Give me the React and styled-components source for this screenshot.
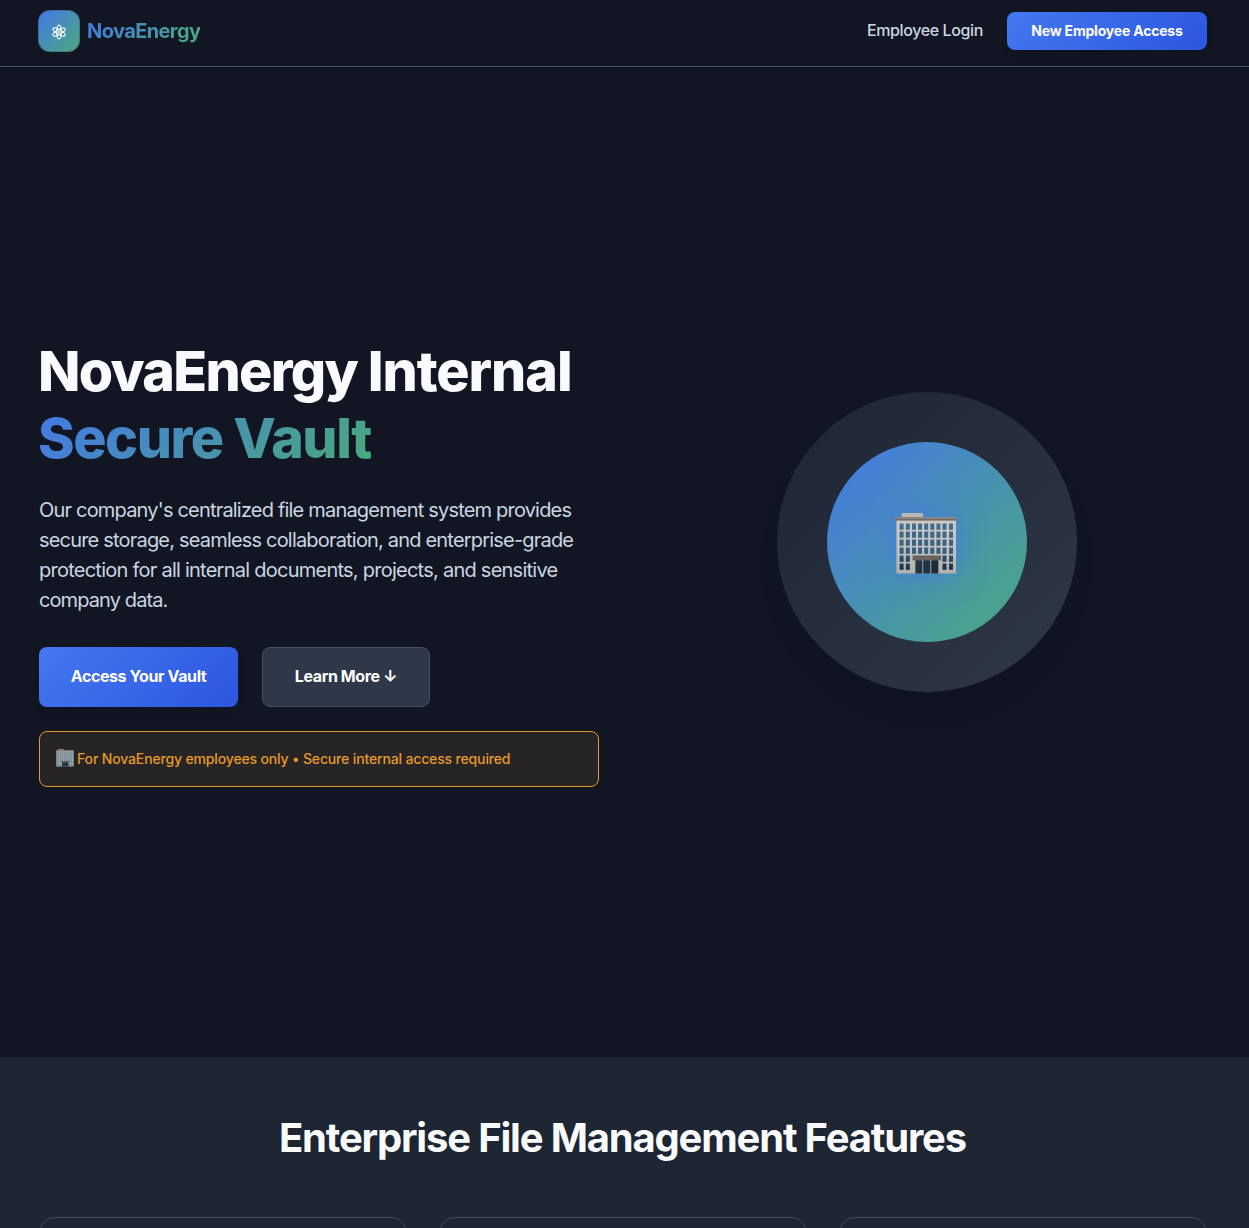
import React from "react";
import styled, { createGlobalStyle } from "styled-components";

const Global = createGlobalStyle`
  *, *::before, *::after { box-sizing: border-box; }
  html { overflow: hidden; height: 100%; }
  body {
    margin: 0;
    height: 100%;
    overflow: hidden;
    background: #121623;
    color: #f8fafc;
    font-family: Inter, "Liberation Sans", sans-serif;
    -webkit-font-smoothing: antialiased;
  }
  h1, h2, p { margin: 0; }
`;

const brandGradient = "linear-gradient(135deg, #4478e8 0%, #4aaa7b 100%)";

const Nav = styled.header`
  height: 67px;
  padding: 0 42px 5px 38px;
  border-bottom: 1px solid #434e61;
  display: flex;
  align-items: center;
  justify-content: space-between;
`;

const Brand = styled.div`
  display: flex;
  align-items: center;
  gap: 7px;
`;

const LogoTile = styled.div`
  width: 42px;
  height: 42px;
  margin-top: 1px;
  border-radius: 12px;
  background: ${brandGradient};
  border: 1px solid rgba(67, 78, 97, 0.45);
  background-origin: border-box;
  display: grid;
  place-items: center;
  padding-top: 2px;
`;

const BrandName = styled.span`
  font-size: 20px;
  line-height: 30px;
  font-weight: 700;
  letter-spacing: -0.6px;
  background: ${brandGradient};
  background-clip: text;
  -webkit-background-clip: text;
  color: transparent;
`;

const NavActions = styled.nav`
  display: flex;
  align-items: center;
  gap: 24px;
`;

const NavLink = styled.a`
  font-size: 16px;
  line-height: 24px;
  font-weight: 520;
  letter-spacing: -0.38px;
  color: #cbd5e1;
  padding-bottom: 2px;
`;

const Button = styled.button`
  font-family: inherit;
  font-weight: 650;
  color: #ffffff;
  border: ${(p) => (p.$muted ? "1px solid #434e61" : "0")};
  border-radius: 8px;
  background: ${(p) => (p.$muted ? "#2f3848" : "linear-gradient(135deg, #4478f0 0%, #2c56e0 100%)")};
  box-shadow: ${(p) => (p.$muted ? "none" : "0 4px 6px -1px rgba(0, 0, 0, 0.15)")};
  width: ${(p) => p.$width}px;
  height: ${(p) => (p.$small ? 38 : 60)}px;
  font-size: ${(p) => (p.$small ? 14 : 16)}px;
  letter-spacing: ${(p) => (p.$small ? "-0.2px" : "-0.4px")};
  padding: ${(p) => (p.$small ? "0" : "0 0 2px")};
  white-space: nowrap;
`;

const Hero = styled.main`
  height: 990px;
  padding: 0 42px 0 39px;
  display: grid;
  grid-template-columns: 560px 560px;
  column-gap: 48px;
  align-items: center;
`;

const Title = styled.h1`
  font-size: 55.5px;
  line-height: 67.2px;
  font-weight: 820;
  letter-spacing: -1.68px;
  margin: 0 0 24px -1px;
  white-space: nowrap;
`;

const TitleWord = styled.span`
  letter-spacing: -1.05px;
`;

const TitleAccent = styled.span`
  display: block;
  width: fit-content;
  letter-spacing: -1.45px;
  background: ${brandGradient};
  background-clip: text;
  -webkit-background-clip: text;
  color: transparent;
`;

const Lead = styled.p`
  font-size: 20px;
  line-height: 30px;
  font-weight: 430;
  color: #cbd5e1;
  margin-bottom: 32px;
`;

const Line = styled.span`
  display: block;
  white-space: nowrap;
  letter-spacing: ${(p) => p.$tracking || -0.81}px;
`;

const Actions = styled.div`
  display: flex;
  gap: 24px;
  margin-bottom: 24px;
`;

const Notice = styled.div`
  height: 56px;
  padding: 0 16px 2px;
  border: 1px solid #e69a2b;
  border-radius: 8px;
  background: #272425;
  color: #e69a2b;
  font-size: 14px;
  font-weight: 530;
  letter-spacing: -0.15px;
  display: flex;
  align-items: center;
  gap: 3px;
`;

const Visual = styled.div`
  display: flex;
  justify-content: center;
  padding-bottom: 40px;
`;

const OuterDisc = styled.div`
  width: 300px;
  height: 300px;
  border-radius: 50%;
  background: linear-gradient(135deg, #1e2533 0%, #2f3848 100%);
  box-shadow: 0 20px 25px -5px rgba(0, 0, 0, 0.1);
  display: grid;
  place-items: center;
`;

const InnerDisc = styled.div`
  width: 200px;
  height: 200px;
  border-radius: 50%;
  background: ${brandGradient};
  display: grid;
  place-items: center;
  padding: 3px 2px 0 0;

  svg { filter: drop-shadow(0 0 14px rgba(68, 120, 232, 0.85)); }
`;

const Features = styled.section`
  height: 171px;
  padding: 51px 42px 0 39px;
  background: #1e2533;
  overflow: hidden;
`;

const SectionTitle = styled.h2`
  font-size: 40px;
  line-height: 60px;
  font-weight: 700;
  letter-spacing: -1.19px;
  text-align: center;
  margin: 0 1px 49px 0;
  white-space: nowrap;
`;

const CardGrid = styled.div`
  display: grid;
  grid-template-columns: repeat(3, 368px);
  gap: 32px;
`;

const Card = styled.article`
  height: 220px;
  border: 1px solid #434e61;
  border-radius: 16px;
  background: #1d2432;
`;

function Atom() {
  return (
    <svg width="16" height="16" viewBox="0 0 16 16" fill="none" stroke="#fff" strokeWidth="1.1">
      <ellipse cx="8" cy="8" rx="2.3" ry="7" />
      <ellipse cx="8" cy="8" rx="2.3" ry="7" transform="rotate(60 8 8)" />
      <ellipse cx="8" cy="8" rx="2.3" ry="7" transform="rotate(-60 8 8)" />
      <circle cx="8" cy="8" r="1" fill="#fff" stroke="none" />
    </svg>
  );
}

function Building() {
  const cols = [4.6, 10.8, 17, 23.1, 29.2, 35.3, 41.4, 47.5, 54];
  const rows = [10.5, 18.5, 26.5, 34.5, 42.5, 50.5];
  return (
    <svg width="62" height="61" viewBox="0 0 62 61">
      <defs>
        <linearGradient id="wall" x1="0" y1="0" x2="0" y2="1">
          <stop offset="0" stopColor="#d0c9c3" />
          <stop offset="0.5" stopColor="#c6c4c1" />
          <stop offset="1" stopColor="#b2b1ae" />
        </linearGradient>
        <linearGradient id="glass" x1="0" y1="10" x2="0" y2="58" gradientUnits="userSpaceOnUse">
          <stop offset="0" stopColor="#41708f" />
          <stop offset="0.6" stopColor="#365e7d" />
          <stop offset="1" stopColor="#172c40" />
        </linearGradient>
      </defs>
      <rect x="6.5" y="0" width="21.5" height="5" fill="#bab7b3" />
      <rect x="1.5" y="4" width="59.5" height="56.5" fill="url(#wall)" />
      <rect x="0" y="4" width="62" height="2" fill="#8b8580" />
      <rect x="1" y="6" width="60" height="1.6" fill="#6f6965" />
      {rows.map((y, r) =>
        cols.map((x, c) =>
          r > 3 && c > 1 && c < 7 ? null : (
            <rect key={`${r}-${c}`} x={x} y={y} width="4" height="6.3" fill="url(#glass)" />
          )
        )
      )}
      <rect x="17.5" y="42.5" width="28.5" height="4.8" fill="#67615f" />
      <rect x="20" y="47.3" width="24" height="13.2" fill="#7f8589" />
      <rect x="20.6" y="47.3" width="6.4" height="13.2" fill="#203442" />
      <rect x="28.4" y="47.3" width="6.6" height="13.2" fill="#1e3445" />
      <rect x="36.4" y="47.3" width="6.6" height="13.2" fill="#1b2d3b" />
    </svg>
  );
}

function SmallBuilding() {
  const rows = [3, 5.4, 7.8, 10.2, 12.6, 15];
  const cols = [1.6, 3.8, 6, 8.2, 10.4, 12.6, 14.8];
  return (
    <svg width="18" height="18" viewBox="0 0 18 18">
      <rect x="2" y="0" width="6" height="2" fill="#858482" />
      <rect x="0.3" y="1" width="17.4" height="16.5" fill="#a0a6a8" />
      <rect x="0" y="1" width="18" height="1.2" fill="#777472" />
      {rows.map((y) =>
        cols.map((x) => (
          <rect key={`${x}-${y}`} x={x} y={y} width="1.4" height="1.7" fill="#5e7c8e" opacity="0.8" />
        ))
      )}
      <rect x="5" y="12" width="8.3" height="1.3" fill="#5c6064" />
      <rect x="6" y="13.3" width="6.4" height="4.2" fill="#263948" />
    </svg>
  );
}

export default function App() {
  return (
    <>
      <Global />
      <Nav>
        <Brand>
          <LogoTile><Atom /></LogoTile>
          <BrandName>NovaEnergy</BrandName>
        </Brand>
        <NavActions>
          <NavLink>Employee Login</NavLink>
          <Button $small $width={200}>New Employee Access</Button>
        </NavActions>
      </Nav>
      <Hero>
        <div>
          <Title>
            NovaEnergy <TitleWord>Internal</TitleWord>
            <TitleAccent>Secure Vault</TitleAccent>
          </Title>
          <Lead>
            <Line>Our company's centralized file management system provides</Line>
            <Line>secure storage, seamless collaboration, and enterprise-grade</Line>
            <Line $tracking={-0.75}>protection for all internal documents, projects, and sensitive</Line>
            <Line $tracking={-0.9}>company data.</Line>
          </Lead>
          <Actions>
            <Button $width={199}>Access Your Vault</Button>
            <Button $muted $width={168}>Learn More ↓</Button>
          </Actions>
          <Notice>
            <SmallBuilding />
            <span>For NovaEnergy employees only • Secure internal access required</span>
          </Notice>
        </div>
        <Visual>
          <OuterDisc>
            <InnerDisc><Building /></InnerDisc>
          </OuterDisc>
        </Visual>
      </Hero>
      <Features>
        <SectionTitle>Enterprise File Management Features</SectionTitle>
        <CardGrid>
          <Card />
          <Card />
          <Card />
        </CardGrid>
      </Features>
    </>
  );
}
